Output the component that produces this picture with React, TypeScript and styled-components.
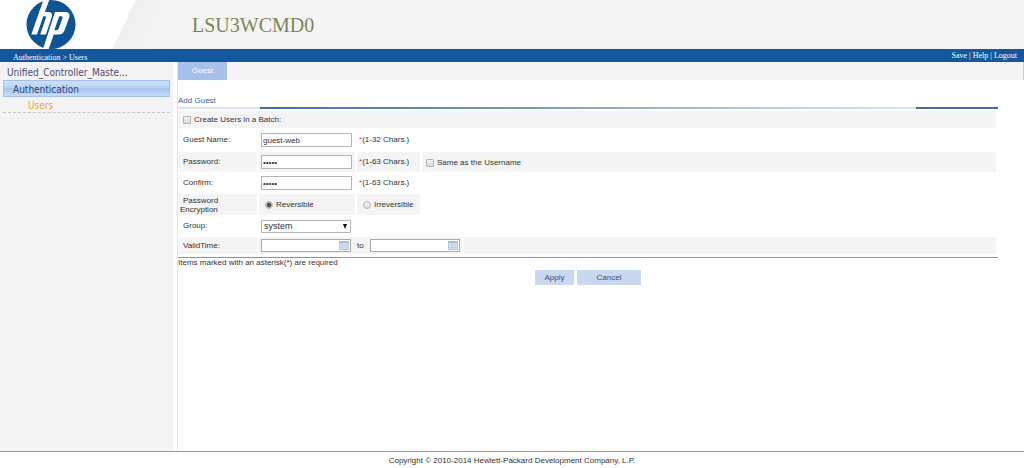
import React from "react";
import styled, { createGlobalStyle } from "styled-components";

const Global = createGlobalStyle`
  * { box-sizing: border-box; }
  html, body, #root { height: 100%; }
  body { margin: 0; background: #fff; color: #333; font: 8px/10px "Liberation Sans", Arial, sans-serif; }
  a { color: inherit; text-decoration: none; }
  input, select, button { font: inherit; color: inherit; margin: 0; }
`;

const Page = styled.div`
  min-height: 100%;
  display: flex;
  flex-direction: column;
`;

const Banner = styled.header`
  display: flex;
  align-items: center;
  height: 49px;
  background: linear-gradient(116deg, #fff 121px, #f0f0f0 123px, #f4f4f4 160px);
`;

const Logo = styled.svg`
  width: 50px;
  height: 50px;
  margin-left: 26px;
  flex: none;
`;

const DeviceName = styled.h1`
  margin: 0 0 0 116px;
  font: 20px/24px "Liberation Serif", "Times New Roman", serif;
  color: #7c8558;
`;

const NavBar = styled.nav`
  display: flex;
  justify-content: space-between;
  height: 13px;
  padding: 0 7px 0 13px;
  background: #13589c;
  color: #fff;
  font: 8px/13px "Liberation Serif", "Times New Roman", serif;
`;

const Crumbs = styled.span`
  padding-top: 2px;
`;

const Body = styled.div`
  flex: 1;
  display: flex;
`;

const Sidebar = styled.aside`
  width: 173px;
  flex: none;
  padding: 2px 3px 0;
  background: #f3f3f3;
  font: 10px/17px "DejaVu Sans Condensed", Tahoma, sans-serif;
  color: #4b4b74;
`;

const TreeItem = styled.a<{ $level: number; $active?: boolean }>`
  display: block;
  height: 16px;
  padding-left: ${(p) => [4, 9, 25][p.$level]}px;
  ${(p) =>
    p.$level === 1 &&
    `
    height: 17px;
    border: 1px solid #a3c0e8;
    background: linear-gradient(#cfe0f7, #b9d3f4 45%, #a5c6f0 50%, #c6dcf8);
    line-height: 17px;
    color: #2f4478;
  `}
  ${(p) =>
    p.$active &&
    `
    border-bottom: 1px dashed #c8c8c8;
    color: #eda52f;
  `}
`;

const Main = styled.main`
  flex: 1;
  min-width: 0;
  margin-left: 4px;
  border-left: 1px solid #ece6cf;
`;

const Tabs = styled.div`
  display: flex;
  height: 18px;
  background: #f4f4f4;
  border-right: 1px solid #ccc;
`;

const Tab = styled.button`
  width: 49px;
  border: 0;
  padding: 0;
  background: #a5c0e9;
  && { color: #fff; }
`;

const Panel = styled.form`
  margin-right: 26px;
  padding-top: 16px;
`;

const PanelTitle = styled.h2`
  margin: 0;
  font-size: 8px;
  line-height: 10px;
  font-weight: normal;
  color: #3d5f94;
`;

const Rule = styled.div`
  display: flex;
  height: 2px;
  margin: 1px 0 2px;
  background: #dbe6f1;

  &::before {
    content: "";
    flex: 1;
    margin-left: 82px;
    background: linear-gradient(90deg, #3f70a5, #6f94bd 35%, #dbe6f1);
  }
  &::after {
    content: "";
    width: 82px;
    background: #43709f;
  }
`;

const Fields = styled.table`
  width: 100%;
  table-layout: fixed;
  border-spacing: 1px 0;
  border-bottom: 1px solid #55a8ca;
  padding-bottom: 3px;
`;

const Row = styled.tr<{ $h: number }>`
  height: ${(p) => p.$h}px;
`;

const Cell = styled.td<{ $shade?: boolean }>`
  padding: 0 0 0 4px;
  vertical-align: middle;
  border-right: 1px solid #fff;
  white-space: nowrap;
  background: ${(p) => (p.$shade ? "#f4f4f4" : "transparent")};
`;

const InputCell = styled(Cell)`
  padding-left: 2px;
`;

const Wrapped = styled.span`
  display: block;
  margin-left: -3px;
  padding-right: 24px;
  text-indent: 3px;
  line-height: 9px;
  white-space: normal;
`;

const Option = styled.label`
  display: flex;
  align-items: center;
  gap: 3px;
  padding-top: 1px;
`;

const RadioOption = styled(Option)`
  padding-left: 2px;
`;

const Check = styled.input`
  appearance: none;
  width: 8px;
  height: 8px;
  border: 1px solid #b4b4b4;
  border-radius: 1px;
  background: linear-gradient(#f2f2f2, #dcdcdc);
`;

const Radio = styled(Check)`
  border-radius: 50%;
  &:checked { background: radial-gradient(#555 0 2px, #e8e8e8 3px); }
`;

const TextBox = styled.input`
  display: block;
  width: 91px;
  height: 14px;
  padding: 0 1px;
  border: 1px solid #b4b4b4;
  background: #fff;
`;

const Star = styled.span`
  color: #e03030;
`;

const GroupSelect = styled.select`
  appearance: none;
  display: block;
  width: 90px;
  height: 13px;
  padding: 0 2px;
  border: 1px solid #b4b4b4;
  border-radius: 1px;
  background: #fff;
  && { font-size: 9px; line-height: 11px; }
`;

const SelectWrap = styled.div`
  position: relative;
  width: 90px;
  &::after {
    content: "";
    position: absolute;
    right: 4px;
    top: 4px;
    border: 2px solid transparent;
    border-top: 5px solid #111;
    border-bottom: 0;
    pointer-events: none;
  }
`;

const Dates = styled.div`
  display: flex;
  align-items: center;
  gap: 6px;
`;

const DateField = styled.div`
  display: flex;
  align-items: center;
  width: 90px;
  height: 13px;
  padding-right: 1px;
  border: 1px solid #aaa;
  background: #fff;
`;

const DateInput = styled.input`
  flex: 1;
  min-width: 0;
  height: 11px;
  border: 0;
  padding: 0 2px;
  background: transparent;
`;

const Note = styled.p`
  margin: 0;
`;

const Actions = styled.div`
  display: flex;
  justify-content: center;
  gap: 3px;
  padding-top: 2px;
`;

const Action = styled.button<{ $w: number }>`
  width: ${(p) => p.$w}px;
  height: 15px;
  border: 0;
  padding: 0;
  background: #c9d7f1;
  && { color: #3f4c78; }
`;

const Footer = styled.footer`
  height: 17px;
  border-top: 1px solid #7ba3b4;
  text-align: center;
  line-height: 17px;
`;

const Calendar = () => (
  <svg width="10" height="9" viewBox="0 0 10 9" aria-hidden="true">
    <rect x=".5" y=".5" width="9" height="8" fill="#dce7f6" stroke="#b3c5de" />
    <path d="M1 1.5h8" stroke="#9db5da" />
    <path d="M1 4h8M1 6.5h8M3.5 2v6M6.5 2v6" stroke="#b5c6df" strokeWidth=".6" />
  </svg>
);

const Chars = ({ range }: { range: string }) => (
  <>
    <Star>*</Star>({range} Chars.)
  </>
);

export default function App() {
  return (
    <Page>
      <Global />
      <Banner>
        <Logo viewBox="0 0 50 50" role="img" aria-label="HP">
          <circle cx="25" cy="24.5" r="24.5" fill="#0c5496" />
          <path
            d="M17.4 0H23.200L18.900 12h3.200c3.300 0 4.700 1.900 3.700 5L19.900 34.500h-5.700l5.600-16.400c.4-1.200.1-1.800-1-1.800h-1.500L11 34.500H5.300Z M29 12h10.500c3.300 0 4.800 2.100 3.700 5.400l-4.500 12.600C37.600 33.300 35.600 34.500 32.400 34.500h-4.600L22.700 49h-5.700Z M33.200 16.200 28.300 30.200h2.300c1.100 0 1.700-.5 2.100-1.600l3.800-10.700c.4-1.200 0-1.700-1.200-1.700Z"
            fill="#fff"
            fillRule="evenodd"
          />
        </Logo>
        <DeviceName>LSU3WCMD0</DeviceName>
      </Banner>
      <NavBar>
        <Crumbs>Authentication &gt; Users</Crumbs>
        <span>
          <a href="#save">Save</a> | <a href="#help">Help</a> | <a href="#logout">Logout</a>
        </span>
      </NavBar>
      <Body>
        <Sidebar>
          <TreeItem href="#device" $level={0}>Unified_Controller_Maste...</TreeItem>
          <TreeItem href="#authentication" $level={1}>Authentication</TreeItem>
          <TreeItem href="#users" $level={2} $active>Users</TreeItem>
        </Sidebar>
        <Main>
          <Tabs>
            <Tab type="button">Guest</Tab>
          </Tabs>
          <Panel onSubmit={(e) => e.preventDefault()}>
            <PanelTitle>Add Guest</PanelTitle>
            <Rule />
            <Fields>
              <colgroup>
                <col width="79" />
                <col width="97" />
                <col width="64" />
                <col width="41" />
                <col />
              </colgroup>
              <tbody>
                <Row $h={17}>
                  <Cell $shade colSpan={5}>
                    <Option><Check type="checkbox" />Create Users in a Batch:</Option>
                  </Cell>
                </Row>
                <Row $h={24}>
                  <Cell><label htmlFor="name">Guest Name:</label></Cell>
                  <InputCell><TextBox id="name" defaultValue="guest-web" /></InputCell>
                  <InputCell colSpan={3}><Chars range="1-32" /></InputCell>
                </Row>
                <Row $h={20}>
                  <Cell $shade><label htmlFor="password">Password:</label></Cell>
                  <InputCell $shade><TextBox id="password" type="password" defaultValue="guest" /></InputCell>
                  <InputCell $shade><Chars range="1-63" /></InputCell>
                  <Cell $shade colSpan={2}>
                    <Option><Check type="checkbox" />Same as the Username</Option>
                  </Cell>
                </Row>
                <Row $h={22}>
                  <Cell><label htmlFor="confirm">Confirm:</label></Cell>
                  <InputCell><TextBox id="confirm" type="password" defaultValue="guest" /></InputCell>
                  <InputCell colSpan={3}><Chars range="1-63" /></InputCell>
                </Row>
                <Row $h={21}>
                  <Cell $shade><Wrapped>Password Encryption</Wrapped></Cell>
                  <Cell $shade>
                    <RadioOption><Radio type="radio" name="encryption" defaultChecked />Reversible</RadioOption>
                  </Cell>
                  <Cell $shade>
                    <RadioOption><Radio type="radio" name="encryption" />Irreversible</RadioOption>
                  </Cell>
                  <Cell colSpan={2} />
                </Row>
                <Row $h={22}>
                  <Cell><label htmlFor="group">Group:</label></Cell>
                  <InputCell colSpan={4}>
                    <SelectWrap>
                      <GroupSelect id="group"><option>system</option></GroupSelect>
                    </SelectWrap>
                  </InputCell>
                </Row>
                <Row $h={17}>
                  <Cell $shade><label htmlFor="from">ValidTime:</label></Cell>
                  <InputCell $shade colSpan={3}>
                    <Dates>
                      <DateField><DateInput id="from" /><Calendar /></DateField>
                      <label htmlFor="to">to</label>
                      <DateField><DateInput id="to" /><Calendar /></DateField>
                    </Dates>
                  </InputCell>
                  <Cell $shade />
                </Row>
              </tbody>
            </Fields>
            <Note>Items marked with an asterisk(*) are required</Note>
            <Actions>
              <Action type="submit" $w={39}>Apply</Action>
              <Action type="button" $w={64}>Cancel</Action>
            </Actions>
          </Panel>
        </Main>
      </Body>
      <Footer>Copyright © 2010-2014 Hewlett-Packard Development Company, L.P.</Footer>
    </Page>
  );
}
